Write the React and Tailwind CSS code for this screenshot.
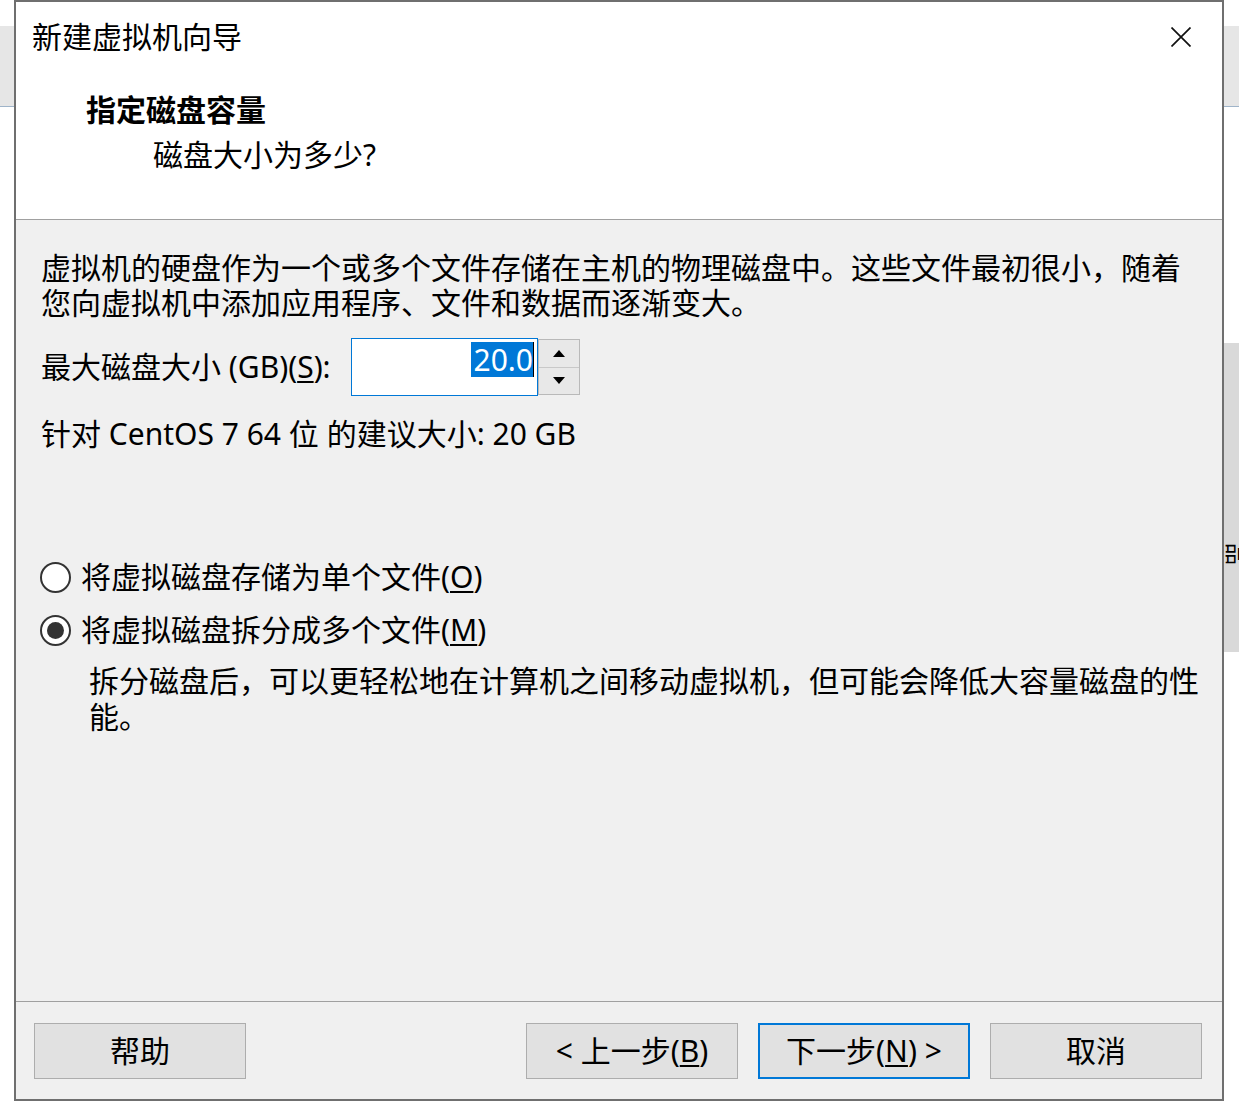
export default function App() {
  const U = ({ children }) => <span className="underline underline-offset-[3px] decoration-[1.5px]">{children}</span>;
  return (
    <div className="w-[1239px] h-[1115px] bg-white flex overflow-hidden text-black font-['Noto_Sans','Noto_Sans_CJK_SC',sans-serif]">
      {/* left background strip */}
      <div className="w-[14px] shrink-0 flex flex-col">
        <div className="h-[26px] bg-white" />
        <div className="h-[81px] bg-[#e6e6e6] border-b border-[#9fb4c9]" />
      </div>

      {/* dialog */}
      <div className="w-[1210px] h-[1101px] shrink-0 border-2 border-[#6f6f6f] bg-[#f0f0f0] flex flex-col">
        {/* header */}
        <div className="h-[218px] shrink-0 bg-white border-b border-[#a0a0a0] flex flex-col">
          <div className="mt-[15px] h-[40px] flex items-center justify-between pl-[16px] pr-[31px]">
            <span className="text-[30px] leading-[40px]">新建虚拟机向导</span>
            <svg width="20" height="20" viewBox="0 0 20 20">
              <path d="M0.5 0.5 L19.5 19.5 M19.5 0.5 L0.5 19.5" stroke="#111" strokeWidth="1.7" fill="none" />
            </svg>
          </div>
          <div className="mt-[33px] pl-[70px] text-[30px] leading-[40px] font-bold">指定磁盘容量</div>
          <div className="mt-[5px] pl-[137px] text-[30px] leading-[40px]">磁盘大小为多少?</div>
        </div>

        {/* body */}
        <div className="flex-1 flex flex-col pl-[25px] text-[30px]">
          <div className="pt-[30px] leading-[35px]">
            <div>虚拟机的硬盘作为一个或多个文件存储在主机的物理磁盘中。这些文件最初很小，随着</div>
            <div>您向虚拟机中添加应用程序、文件和数据而逐渐变大。</div>
          </div>

          <div className="mt-[18px] h-[58px] flex items-center">
            <div className="w-[310px] leading-[40px]">
              最大磁盘大小 (GB)(<U>S</U>):
            </div>
            <div className="w-[187px] h-[58px] border border-[#0078d7] bg-white flex items-start justify-end pt-[3px] pr-[3px]">
              <span className="bg-[#0078d7] text-white leading-[35px] pl-[2px]">20.0</span>
              <span className="w-[1px] h-[35px] bg-black" />
            </div>
            <div className="w-[42px] h-[56px] border border-[#b9b9b9] flex flex-col">
              <div className="flex-1 bg-[#e8e8e8] border-b border-[#c8c8c8] flex items-center justify-center">
                <svg width="12" height="7" viewBox="0 0 12 7"><path d="M6 0 L12 7 L0 7 Z" fill="#000" /></svg>
              </div>
              <div className="flex-1 bg-[#e8e8e8] flex items-center justify-center">
                <svg width="12" height="7" viewBox="0 0 12 7"><path d="M0 0 L12 0 L6 7 Z" fill="#000" /></svg>
              </div>
            </div>
          </div>

          <div className="mt-[20px] leading-[35px]">针对 CentOS 7 64 位 的建议大小: 20 GB</div>

          <div className="mt-[106px] h-[40px] flex items-center -ml-[1px]">
            <span className="w-[31px] h-[31px] rounded-full border-2 border-[#333] bg-white shrink-0" />
            <span className="ml-[10px] leading-[40px]">将虚拟磁盘存储为单个文件(<U>O</U>)</span>
          </div>
          <div className="mt-[13px] h-[40px] flex items-center -ml-[1px]">
            <span className="w-[31px] h-[31px] rounded-full border-2 border-[#333] bg-white shrink-0 flex items-center justify-center">
              <span className="w-[17px] h-[17px] rounded-full bg-[#333]" />
            </span>
            <span className="ml-[10px] leading-[40px]">将虚拟磁盘拆分成多个文件(<U>M</U>)</span>
          </div>
          <div className="mt-[13px] pl-[48px] leading-[36px]">
            <div>拆分磁盘后，可以更轻松地在计算机之间移动虚拟机，但可能会降低大容量磁盘的性</div>
            <div>能。</div>
          </div>
        </div>

        {/* footer */}
        <div className="h-[98px] shrink-0 border-t border-[#a0a0a0] pt-[21px] pl-[18px] pr-[20px] flex text-[30px]">
          <button className="w-[212px] h-[56px] bg-[#e1e1e1] border border-[#adadad] leading-[40px]">帮助</button>
          <div className="flex-1" />
          <button className="w-[212px] h-[56px] bg-[#e1e1e1] border border-[#adadad] leading-[40px]">&lt; 上一步(<U>B</U>)</button>
          <button className="ml-[20px] w-[212px] h-[56px] bg-[#e1e1e1] border-2 border-[#0078d7] leading-[40px]">下一步(<U>N</U>) &gt;</button>
          <button className="ml-[20px] w-[212px] h-[56px] bg-[#e1e1e1] border border-[#adadad] leading-[40px]">取消</button>
        </div>
      </div>

      {/* right background strip */}
      <div className="w-[15px] shrink-0 flex flex-col">
        <div className="h-[26px] bg-white" />
        <div className="h-[81px] bg-[#e6e6e6] border-b border-[#9fb4c9]" />
        <div className="h-[236px] bg-white" />
        <div className="h-[309px] bg-[#d9d9d9] overflow-hidden flex flex-col">
          <div className="mt-[200px] ml-[1px] w-[24px] h-[24px] rotate-90 text-[22px] leading-[24px]">品</div>
        </div>
      </div>
    </div>
  );
}
